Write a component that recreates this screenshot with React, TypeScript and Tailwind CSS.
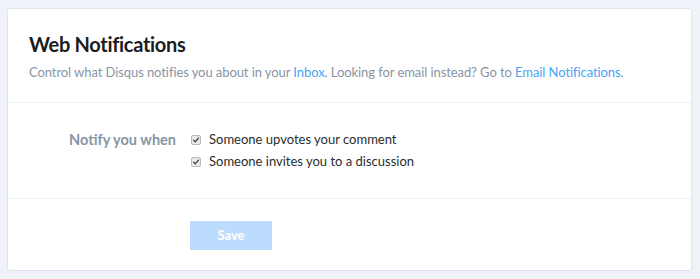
import React from 'react';

const CheckMark: React.FC = () => (
  <span className="grid h-[10px] w-[10px] place-items-center rounded-[2px] border border-[#b9b9b9] bg-[#e9e9e9]">
    <svg viewBox="0 0 10 10" className="h-[8px] w-[8px]">
      <path d="M2 5.2 L4.1 7.3 L8 2.6" fill="none" stroke="#3a3a3a" strokeWidth="1.6" strokeLinecap="round" strokeLinejoin="round" />
    </svg>
  </span>
);

const options = ['Someone upvotes your comment', 'Someone invites you to a discussion'];

const App: React.FC = () => {
  return (
    <div className="min-h-[279px] bg-[#eff2f9] px-[7px] pt-[8px] pb-[7px] font-['Lato','Open_Sans',sans-serif]">
      <section className="w-[685px] rounded-[3px] border border-[#e2e5ee] bg-white">
        <header className="border-b border-[#eceff5] px-[21px] pt-[21px] pb-[20px]">
          <h1 className="text-[20px] font-bold leading-[28px] tracking-[-0.3px] text-[#1c1c1c]">Web Notifications</h1>
          <p className="mt-[4px] whitespace-nowrap text-[13px] leading-[20px] tracking-[-0.08px] text-[#8894a3]">
            Control what Disqus notifies you about in your <a className="text-[#4aa3f4]">Inbox</a>. Looking for email
            instead? Go to <a className="text-[#4aa3f4]">Email Notifications</a>.
          </p>
        </header>

        <div className="flex border-b border-[#eceff5] pt-[26px] pb-[25px]">
          <div className="w-[168px] text-right text-[14.5px] font-bold leading-[22px] text-[#8795a4]">Notify you when</div>
          <div className="ml-[15px] flex flex-col">
            {options.map((label) => (
              <label key={label} className="flex h-[22px] items-center gap-[8px] text-[13px] text-[#2a2e2e]">
                <CheckMark />
                {label}
              </label>
            ))}
          </div>
        </div>

        <div className="pt-[22px] pb-[20px] pl-[182px]">
          <button
            type="button"
            className="h-[29px] w-[82px] bg-[#bcdcfd] text-[13px] font-bold text-white"
          >
            Save
          </button>
        </div>
      </section>
    </div>
  );
};

export default App;
